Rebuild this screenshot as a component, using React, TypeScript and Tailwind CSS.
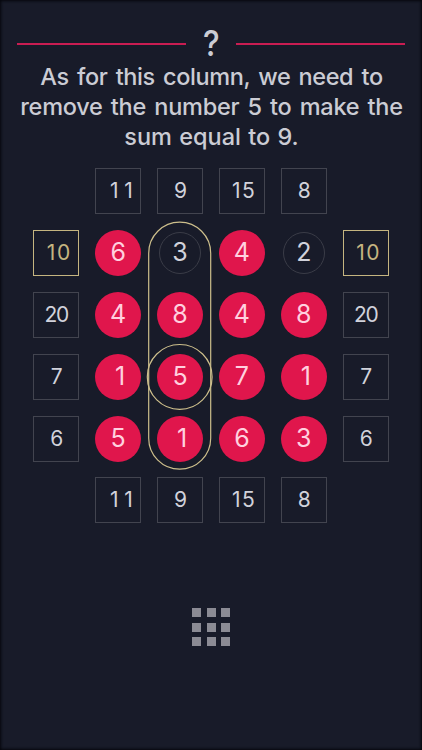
type Cell = { value: number; off?: boolean };

const sums = [11, 9, 15, 8];
const rows: { sum: number; done?: boolean; cells: Cell[] }[] = [
  { sum: 10, done: true, cells: [{ value: 6 }, { value: 3, off: true }, { value: 4 }, { value: 2, off: true }] },
  { sum: 20, cells: [{ value: 4 }, { value: 8 }, { value: 4 }, { value: 8 }] },
  { sum: 7, cells: [{ value: 1 }, { value: 5 }, { value: 7 }, { value: 1 }] },
  { sum: 6, cells: [{ value: 5 }, { value: 1 }, { value: 6 }, { value: 3 }] },
];

function Sum({ value, done = false }: { value: number; done?: boolean }) {
  const tone = done ? "border-[#c5b580] text-[#c5b580]" : "border-[#42444f] text-[#d1d2db]";
  const spacing =
    value === 11 ? "tracking-[5.5px] pl-[12px]" : value === 15 ? "tracking-[1.5px] pl-[4.5px]" : value === 10 ? "tracking-[1.5px] pl-[6px]" : value === 20 ? "tracking-[-1.2px]" : "pl-px";
  return (
    <div className={`flex size-[46px] items-center justify-center border pb-px text-[21px] leading-none ${tone}`}>
      <span className={spacing}>{value}</span>
    </div>
  );
}

function Dot({ value, off }: Cell) {
  return (
    <div className="flex size-[46px] items-center justify-center">
      <div className={`flex items-center justify-center rounded-full text-[25px] leading-none ${off ? "size-[42px] border border-[#3a3c47] text-[#d1d2db]" : "size-[46px] bg-[#e0164c] text-[#ffd0df]"}`}>
        <span className={value === 1 ? "pl-1" : ""}>{value}</span>
      </div>
    </div>
  );
}

function SumRow() {
  return (
    <div className="flex justify-center gap-[15.9px]">
      {sums.map((s) => <Sum key={s} value={s} />)}
    </div>
  );
}

export default function App() {
  return (
    <main className="flex h-[750px] w-[422px] flex-col items-center overflow-hidden bg-[#181b29] font-['Inter','Liberation_Sans',sans-serif] text-[#cbccd4] shadow-[inset_0_0_3px_1px_#05060c]">
      <header className="mt-[25px] flex h-9 w-[388px] items-center justify-between">
        <div className="mt-px h-[2px] w-[169px] bg-[#c91d52]" />
        <span className="scale-x-90 text-[35px] font-medium leading-9">?</span>
        <div className="mt-px h-[2px] w-[169px] bg-[#c91d52]" />
      </header>
      <p className="mt-[0.5px] flex flex-col items-center whitespace-nowrap pl-px text-[23.5px] font-medium leading-[30px]">
        <span className="tracking-[-0.4px] [word-spacing:2.4px]">As for this column, we need to</span>
        <span className="tracking-[-0.25px] [word-spacing:2.2px]">remove the number 5 to make the</span>
        <span className="[word-spacing:1px]">sum equal to 9.</span>
      </p>
      <section className="relative mt-[16.5px] flex flex-col items-center gap-[15.9px]">
        <SumRow />
        {rows.map((row) => (
          <div key={row.sum} className="flex gap-[15.9px]">
            <Sum value={row.sum} done={row.done} />
            {row.cells.map((cell, i) => <Dot key={i} {...cell} />)}
            <Sum value={row.sum} done={row.done} />
          </div>
        ))}
        <SumRow />
        <svg className="absolute left-[113px] top-[52px] h-[252px] w-[68px]" fill="none" stroke="#cdbf8c" strokeWidth="1.2">
          <rect x="2.7" y="2.2" width="62" height="247" rx="31" />
          <circle cx="33.7" cy="156.9" r="32.4" />
        </svg>
      </section>
      <div className="mt-[84.4px] grid grid-cols-3 gap-[5.7px]">
        {Array.from({ length: 9 }, (_, i) => <div key={i} className="size-[9px] bg-[#8b8b94]" />)}
      </div>
    </main>
  );
}
